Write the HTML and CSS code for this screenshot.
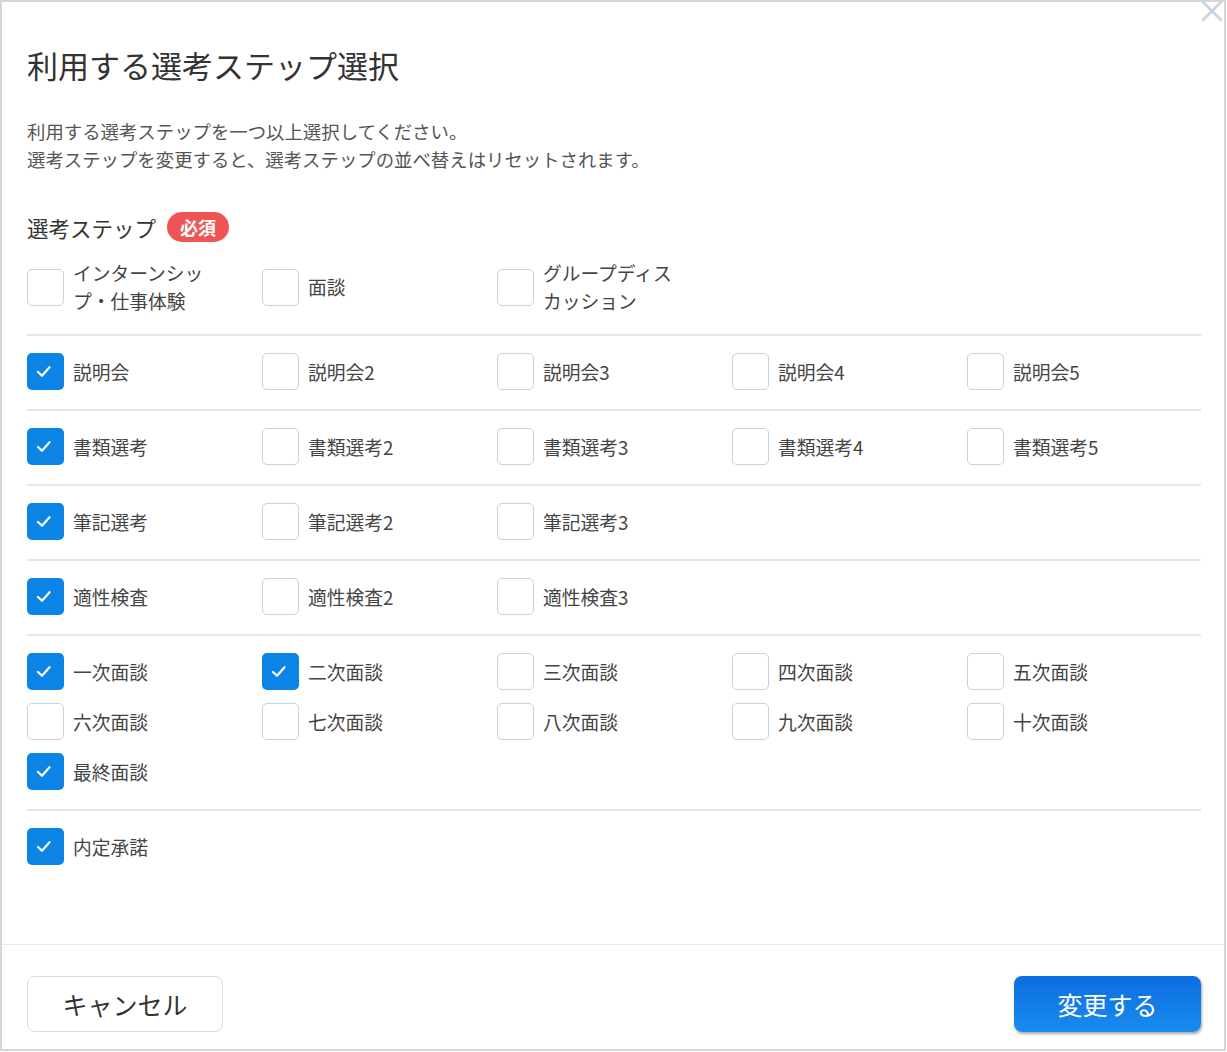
FILE: index.html
```html
<!DOCTYPE html>
<html lang="ja">

<head>
    <meta charset="UTF-8">
    <meta name="viewport" content="width=device-width, initial-scale=1.0">
    <title>利用する選考ステップ選択</title>
    <link rel="stylesheet" href="styles.css">
</head>

<body>
    <div class="modal">
        <button class="modal-close" type="button" aria-label="閉じる">
            <svg width="22" height="22" viewBox="0 0 22 22">
                <path d="M2 2 L20 20 M20 2 L2 20" stroke="#c3d3e3" stroke-width="2.6" stroke-linecap="round" fill="none" />
            </svg>
        </button>

        <div class="modal-body">
            <h1 class="modal-title">利用する選考ステップ選択</h1>
            <p class="modal-desc">利用する選考ステップを一つ以上選択してください。<br>選考ステップを変更すると、選考ステップの並べ替えはリセットされます。</p>

            <div class="field-label">選考ステップ <span class="badge">必須</span></div>

            <!-- インターン・面談系 -->
            <div class="step-group">
                <label class="step"><span class="box"></span><span class="step-name">インターンシップ・仕事体験</span></label>
                <label class="step"><span class="box"></span><span class="step-name">面談</span></label>
                <label class="step"><span class="box"></span><span class="step-name">グループディスカッション</span></label>
            </div>

            <!-- 説明会 -->
            <div class="step-group">
                <label class="step checked"><span class="box"><svg width="16" height="13" viewBox="0 0 16 13"><path d="M2 7 L6 10.8 L13.5 2.2" stroke="#fff" stroke-width="2.2" fill="none" stroke-linecap="round" stroke-linejoin="round" /></svg></span><span class="step-name">説明会</span></label>
                <label class="step"><span class="box"></span><span class="step-name">説明会2</span></label>
                <label class="step"><span class="box"></span><span class="step-name">説明会3</span></label>
                <label class="step"><span class="box"></span><span class="step-name">説明会4</span></label>
                <label class="step"><span class="box"></span><span class="step-name">説明会5</span></label>
            </div>

            <!-- 書類選考 -->
            <div class="step-group">
                <label class="step checked"><span class="box"><svg width="16" height="13" viewBox="0 0 16 13"><path d="M2 7 L6 10.8 L13.5 2.2" stroke="#fff" stroke-width="2.2" fill="none" stroke-linecap="round" stroke-linejoin="round" /></svg></span><span class="step-name">書類選考</span></label>
                <label class="step"><span class="box"></span><span class="step-name">書類選考2</span></label>
                <label class="step"><span class="box"></span><span class="step-name">書類選考3</span></label>
                <label class="step"><span class="box"></span><span class="step-name">書類選考4</span></label>
                <label class="step"><span class="box"></span><span class="step-name">書類選考5</span></label>
            </div>

            <!-- 筆記選考 -->
            <div class="step-group">
                <label class="step checked"><span class="box"><svg width="16" height="13" viewBox="0 0 16 13"><path d="M2 7 L6 10.8 L13.5 2.2" stroke="#fff" stroke-width="2.2" fill="none" stroke-linecap="round" stroke-linejoin="round" /></svg></span><span class="step-name">筆記選考</span></label>
                <label class="step"><span class="box"></span><span class="step-name">筆記選考2</span></label>
                <label class="step"><span class="box"></span><span class="step-name">筆記選考3</span></label>
            </div>

            <!-- 適性検査 -->
            <div class="step-group">
                <label class="step checked"><span class="box"><svg width="16" height="13" viewBox="0 0 16 13"><path d="M2 7 L6 10.8 L13.5 2.2" stroke="#fff" stroke-width="2.2" fill="none" stroke-linecap="round" stroke-linejoin="round" /></svg></span><span class="step-name">適性検査</span></label>
                <label class="step"><span class="box"></span><span class="step-name">適性検査2</span></label>
                <label class="step"><span class="box"></span><span class="step-name">適性検査3</span></label>
            </div>

            <!-- 面接 -->
            <div class="step-group">
                <label class="step checked"><span class="box"><svg width="16" height="13" viewBox="0 0 16 13"><path d="M2 7 L6 10.8 L13.5 2.2" stroke="#fff" stroke-width="2.2" fill="none" stroke-linecap="round" stroke-linejoin="round" /></svg></span><span class="step-name">一次面談</span></label>
                <label class="step checked"><span class="box"><svg width="16" height="13" viewBox="0 0 16 13"><path d="M2 7 L6 10.8 L13.5 2.2" stroke="#fff" stroke-width="2.2" fill="none" stroke-linecap="round" stroke-linejoin="round" /></svg></span><span class="step-name">二次面談</span></label>
                <label class="step"><span class="box"></span><span class="step-name">三次面談</span></label>
                <label class="step"><span class="box"></span><span class="step-name">四次面談</span></label>
                <label class="step"><span class="box"></span><span class="step-name">五次面談</span></label>
                <label class="step"><span class="box"></span><span class="step-name">六次面談</span></label>
                <label class="step"><span class="box"></span><span class="step-name">七次面談</span></label>
                <label class="step"><span class="box"></span><span class="step-name">八次面談</span></label>
                <label class="step"><span class="box"></span><span class="step-name">九次面談</span></label>
                <label class="step"><span class="box"></span><span class="step-name">十次面談</span></label>
                <label class="step checked"><span class="box"><svg width="16" height="13" viewBox="0 0 16 13"><path d="M2 7 L6 10.8 L13.5 2.2" stroke="#fff" stroke-width="2.2" fill="none" stroke-linecap="round" stroke-linejoin="round" /></svg></span><span class="step-name">最終面談</span></label>
            </div>

            <!-- 内定 -->
            <div class="step-group last">
                <label class="step checked"><span class="box"><svg width="16" height="13" viewBox="0 0 16 13"><path d="M2 7 L6 10.8 L13.5 2.2" stroke="#fff" stroke-width="2.2" fill="none" stroke-linecap="round" stroke-linejoin="round" /></svg></span><span class="step-name">内定承諾</span></label>
            </div>
        </div>

        <div class="modal-footer">
            <button class="btn btn-cancel" type="button">キャンセル</button>
            <button class="btn btn-submit" type="button">変更する</button>
        </div>
    </div>
</body>

</html>
```

FILE: styles.css
```css
* {
    box-sizing: border-box;
}

body {
    margin: 0;
    background: #fff;
    font-family: "Noto Sans CJK JP", "Noto Sans", sans-serif;
    color: #333;
}

.modal {
    position: relative;
    width: 1226px;
    height: 1051px;
    border: 2px solid #d6d6d6;
    background: #fff;
    display: flex;
    flex-direction: column;
    overflow: hidden;
}

.modal-close {
    position: absolute;
    top: -2px;
    right: 1px;
    padding: 0;
    border: none;
    background: none;
    line-height: 0;
}

.modal-body {
    flex: 1;
    padding: 43px 23px 0 25px;
}

.modal-title {
    margin: 0;
    font-size: 31px;
    line-height: 40px;
    font-weight: normal;
    color: #333;
}

.modal-desc {
    margin: 32px 0 0;
    font-size: 18.4px;
    line-height: 28px;
    color: #555;
}

.field-label {
    margin-top: 39px;
    height: 30px;
    display: flex;
    align-items: center;
    font-size: 21.5px;
    color: #333;
}

.badge {
    margin-left: 11px;
    height: 30px;
    padding: 0 13px;
    border-radius: 15px;
    background: #ef5456;
    color: #fff;
    font-size: 18px;
    font-weight: bold;
    line-height: 30px;
}

.step-group {
    display: grid;
    grid-template-columns: repeat(5, 235px);
    row-gap: 13px;
    padding: 17px 0 19px;
    border-bottom: 2px solid #e6e6e6;
}

.step-group:first-of-type {
    padding: 19px 0 20px;
}

.step-group.last {
    border-bottom: none;
}

.step {
    display: flex;
    align-items: center;
    min-height: 37px;
}

.box {
    flex: none;
    width: 37px;
    height: 37px;
    border: 1.5px solid #c4d3df;
    border-radius: 5px;
    background: #fff;
    display: flex;
    align-items: center;
    justify-content: center;
}

.step.checked .box {
    border: none;
    background: #0b84e6;
}

.step.checked .box svg {
    margin-left: -3px;
}

.step-name {
    margin-left: 9px;
    max-width: 140px;
    font-size: 18.75px;
    line-height: 28px;
    color: #444;
}

.modal-footer {
    display: flex;
    justify-content: space-between;
    padding: 31px 23px 17px 25px;
    border-top: 1px solid #e8e8e8;
}

.btn {
    height: 56px;
    border-radius: 8px;
    font-family: inherit;
    font-size: 25px;
}

.btn-cancel {
    width: 196px;
    border: 1.5px solid #dcdcdc;
    background: #fff;
    color: #333;
}

.btn-submit {
    width: 187px;
    border: none;
    background: linear-gradient(#0a6edf, #1a8bee);
    color: #fff;
    box-shadow: 1px 2px 3px rgba(0, 0, 0, 0.35);
}
```
